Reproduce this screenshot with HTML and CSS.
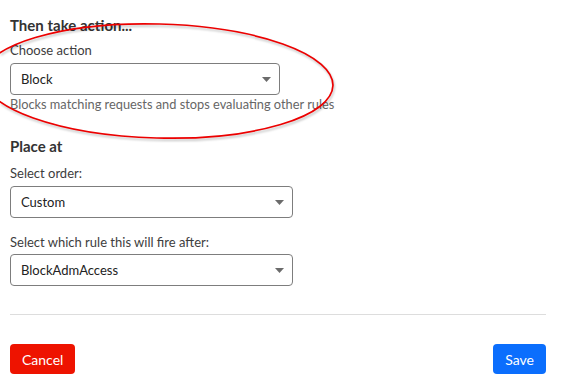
FILE: index.html
```html
<!DOCTYPE html>
<html lang="en">

<head>
    <meta charset="UTF-8" />
    <title>Rule action</title>
    <link rel="stylesheet" href="styles.css">
</head>

<body>
    <div class="panel">
        <h4 class="section-title">Then take action...</h4>
        <label class="field-label">Choose action</label>
        <div class="select select-action">
            <span>Block</span>
            <svg class="caret" width="9" height="5" viewBox="0 0 9 5"><path d="M0 0h9L4.5 5z" fill="#6b6b6b"/></svg>
        </div>
        <div class="help-text">Blocks matching requests and stops evaluating other rules</div>

        <h4 class="section-title place-title">Place at</h4>
        <label class="field-label order-label">Select order:</label>
        <div class="select select-wide">
            <span>Custom</span>
            <svg class="caret" width="9" height="5" viewBox="0 0 9 5"><path d="M0 0h9L4.5 5z" fill="#6b6b6b"/></svg>
        </div>
        <label class="field-label after-label">Select which rule this will fire after:</label>
        <div class="select select-wide after-select">
            <span>BlockAdmAccess</span>
            <svg class="caret" width="9" height="5" viewBox="0 0 9 5"><path d="M0 0h9L4.5 5z" fill="#6b6b6b"/></svg>
        </div>

        <hr class="divider" />

        <div class="actions">
            <button class="btn btn-cancel">Cancel</button>
            <button class="btn btn-save">Save</button>
        </div>
    </div>

    <!-- annotation drawn over the screenshot -->
    <svg class="annotation" width="561" height="384" viewBox="0 0 561 384">
        <ellipse cx="158" cy="81" rx="175" ry="57" transform="rotate(1.5 158 81)" fill="none" stroke="#ec0000" stroke-width="1.7"/>
    </svg>
</body>

</html>
```

FILE: styles.css
```css
:root {
    --text-color: #333333;
    --label-color: #3d3d3d;
    --muted: #666666;
    --border: #7d7d7d;
    --danger: #ee1300;
    --primary: #0b6efd;
}

body {
    font-family: 'Lato', 'Noto Sans', sans-serif;
    background: #ffffff;
    color: var(--text-color);
    margin: 0;
}

.panel {
    padding: 15px 15px 0 10px;
}

.section-title {
    margin: 0;
    font-size: 15px;
    line-height: 20px;
    font-weight: bold;
    color: var(--text-color);
}

.place-title {
    margin-top: 23px;
}

.field-label {
    display: block;
    margin-top: 6px;
    font-size: 13px;
    line-height: 18px;
    color: var(--label-color);
}

.order-label {
    margin-top: 8px;
}

.after-label {
    margin-top: 15px;
}

.select {
    box-sizing: border-box;
    display: flex;
    align-items: center;
    justify-content: space-between;
    height: 32px;
    margin-top: 4px;
    padding: 0 8px 0 10px;
    border: 1px solid var(--border);
    border-radius: 4px;
    font-size: 13px;
    color: #222;
}

.select-action {
    width: 270px;
}

.select-wide {
    width: 283px;
}

.after-select {
    margin-top: 3px;
}

.help-text {
    font-size: 12.8px;
    line-height: 18px;
    color: var(--muted);
}

.divider {
    margin: 28px 0 0 0;
    border: none;
    border-top: 1px solid #dddddd;
}

.actions {
    display: flex;
    justify-content: space-between;
    margin-top: 29px;
}

.btn {
    height: 30px;
    padding: 0 12px;
    border: none;
    border-radius: 4px;
    color: white;
    font-family: inherit;
    font-size: 14px;
}

.btn-cancel {
    background-color: var(--danger);
}

.btn-save {
    background-color: var(--primary);
}

.annotation {
    position: absolute;
    top: 0;
    left: 0;
    pointer-events: none;
    filter: drop-shadow(1px 2px 1px rgba(0, 0, 0, 0.25));
}
```
